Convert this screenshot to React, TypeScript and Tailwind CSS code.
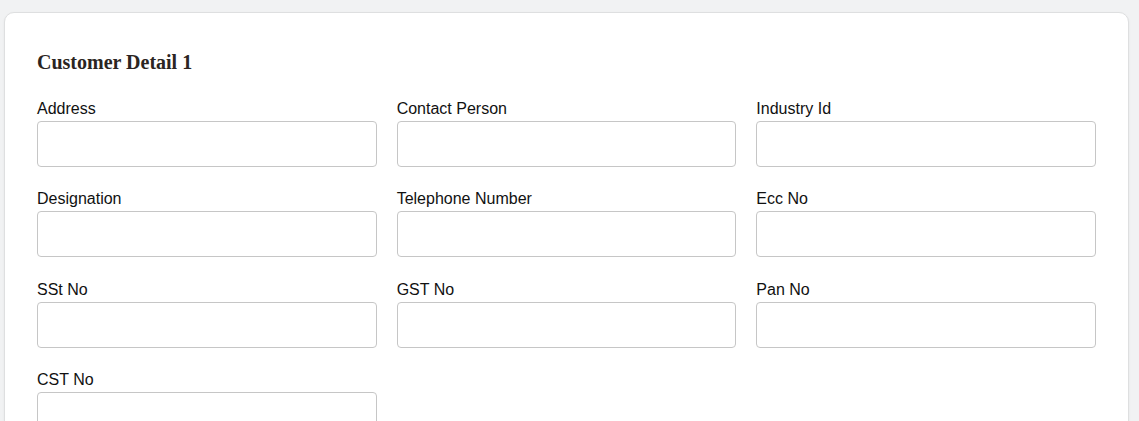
const fields = [
  'Address',
  'Contact Person',
  'Industry Id',
  'Designation',
  'Telephone Number',
  'Ecc No',
  'SSt No',
  'GST No',
  'Pan No',
  'CST No',
];

export default function App() {
  return (
    <div className="min-h-screen bg-[#f1f2f3] pt-[12px] pl-[4px] pr-[10px]" style={{ fontFamily: '"Liberation Sans", Arial, sans-serif' }}>
      <div className="bg-white border border-[#dedfe0] rounded-[10px] shadow-[0_1px_3px_rgba(0,0,0,0.05)] px-[32px] pt-[37px] pb-[40px]">
        {/* Header */}
        <h4
          className="text-[20px] leading-[24px] font-bold text-[#2b2522] mb-[22px]"
          style={{ fontFamily: '"Liberation Serif", "Times New Roman", serif' }}
        >
          Customer Detail 1
        </h4>

        <div className="grid grid-cols-3 gap-x-5 gap-y-[19.3px]">
          {fields.map((label) => (
            <div key={label} className="flex flex-col">
              <label className="text-[16px] leading-[24px] text-[#111] pt-[1px]">{label}</label>
              <input
                type="text"
                className="h-[46px] w-full rounded-[4px] border border-[#c6c6c6] bg-white px-3 outline-none"
              />
            </div>
          ))}
        </div>
      </div>
    </div>
  );
}
